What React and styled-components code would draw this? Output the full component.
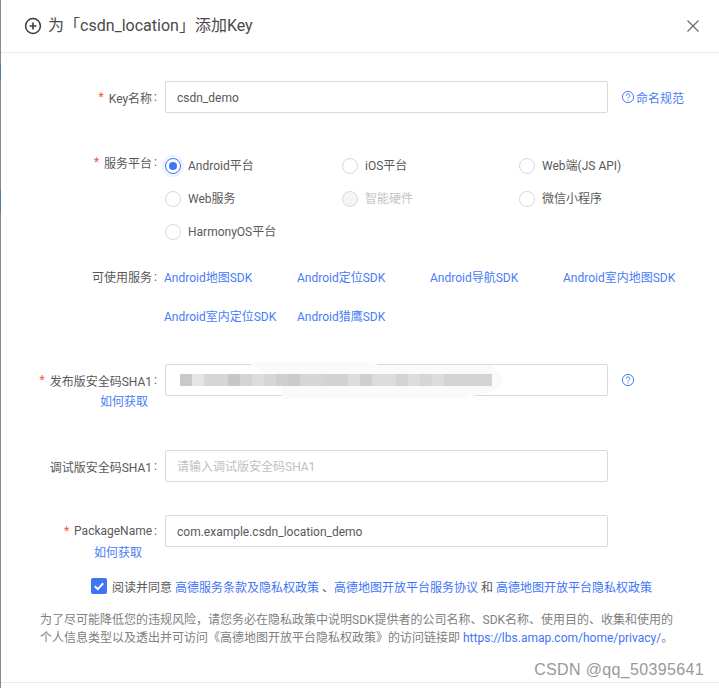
import React from "react";
import styled, { createGlobalStyle } from "styled-components";

const Global = createGlobalStyle`
  html, body { margin: 0; padding: 0; background: #fff; }
  body { font-family: Roboto, "Noto Sans CJK SC", sans-serif; font-size: 12px; color: #595959; }
  * { box-sizing: border-box; }
`;

const Page = styled.div`
  position: relative;
  display: flex;
  width: 719px;
  height: 688px;
  overflow: hidden;
  background: #fff;
`;
const EdgeStrip = styled.div`
  flex: 0 0 1px;
  background: linear-gradient(to bottom, #8a8a8a 0 64px, #5a78b0 64px 80px, #8a8a8a 80px 190px, #5a78b0 190px 212px, #8a8a8a 212px 100%);
`;
const Dialog = styled.div`
  flex: 1;
  display: flex;
  flex-direction: column;
  min-width: 0;
`;
const Header = styled.header`
  flex: 0 0 53px;
  display: flex;
  align-items: center;
  padding: 0 19px 0 23px;
  border-bottom: 1px solid #e8e8e8;
`;
const Title = styled.h1`
  flex: 1;
  margin: 0 0 0 6px;
  font-size: 16px;
  font-weight: 400;
  line-height: 24px;
  color: #4a4a4a;
`;
const Form = styled.form`
  flex: 1;
  display: flex;
  flex-direction: column;
  margin: 0;
  padding-top: 28px;
`;
const Row = styled.div`
  display: grid;
  grid-template-columns: 164px 443px auto;
  align-items: ${(p) => (p.$top ? "start" : "center")};
  margin-top: ${(p) => p.$mt || 0}px;
`;
const Label = styled.label`
  display: flex;
  justify-content: flex-end;
  align-items: center;
  height: ${(p) => p.$h || 32}px;
  color: #595959;
  white-space: nowrap;
`;
const Star = styled.span`
  color: #f5563c;
  margin-right: 5px;
`;
const Colon = styled.span`
  margin: 0 8px 0 2px;
`;
const FieldWrap = styled.div`
  position: relative;
  height: 32px;
`;
const Input = styled.input`
  display: block;
  width: 100%;
  height: 32px;
  padding: 2px 11px 0;
  border: 1px solid #d9d9d9;
  border-radius: 2px;
  outline: none;
  background: #fff;
  font: inherit;
  color: #595959;
  &::placeholder { color: #bfbfbf; opacity: 1; }
`;
const Smear = styled.div`
  position: absolute;
  left: 85px;
  top: -3px;
  width: 255px;
  height: 38px;
  background: #fafafa;
  clip-path: polygon(0 3px, 10px 0, 120px 0, 128px 4px, 240px 4px, 255px 18px, 245px 30px, 218px 36px, 218px 38px, 32px 38px, 32px 20px);
`;
const Mosaic = styled.div`
  position: absolute;
  left: 15px;
  top: 10px;
  display: flex;
`;
const MosaicCell = styled.i`
  display: block;
  width: 12px;
  height: 12px;
  background: ${(p) => p.$c};
`;
const HelpLink = styled.a`
  display: flex;
  align-items: center;
  gap: 1px;
  margin-left: 13px;
  color: #4a7cf6;
  white-space: nowrap;
`;
const SubLink = styled.a`
  display: block;
  height: 16px;
  line-height: 16px;
  margin-top: -2px;
  padding-right: ${(p) => p.$pr}px;
  text-align: right;
  color: #4a7cf6;
`;
const RadioGrid = styled.div`
  display: grid;
  grid-template-columns: repeat(3, 177px);
  grid-auto-rows: 33px;
  align-items: center;
`;
const RadioItem = styled.div`
  display: flex;
  align-items: center;
  gap: 7px;
  color: ${(p) => (p.$disabled ? "#c4c4c4" : "#595959")};
`;
const RadioText = styled.span`
  padding-bottom: 2px;
`;
const RadioDot = styled.span`
  position: relative;
  flex: 0 0 16px;
  width: 16px;
  height: 16px;
  border-radius: 50%;
  border: 1px solid ${(p) => (p.$on ? "#3f74f6" : "#d9d9d9")};
  background: ${(p) => (p.$disabled ? "#f5f5f5" : "#fff")};
  box-shadow: ${(p) => (p.$on ? "0 0 0 3px #eef3fe" : "none")};
  &::after {
    content: "";
    display: ${(p) => (p.$on ? "block" : "none")};
    position: absolute;
    left: 3px;
    top: 3px;
    width: 8px;
    height: 8px;
    border-radius: 50%;
    background: #3f74f6;
  }
`;
const ServiceRow = styled.div`
  display: grid;
  grid-template-columns: 164px 1fr;
  margin-top: 10px;
`;
const ServiceGrid = styled.div`
  display: grid;
  grid-template-columns: repeat(4, 133px);
  grid-auto-rows: 39px;
  align-items: center;
  margin-left: -1px;
`;
const ServiceLink = styled.a`
  padding-bottom: 2px;
  color: #4a7cf6;
  white-space: nowrap;
`;
const Agree = styled.div`
  display: flex;
  align-items: center;
  height: 16px;
  margin-top: 17px;
  padding-left: 90px;
  white-space: pre;
  color: #595959;
`;
const CheckBox = styled.span`
  flex: 0 0 16px;
  display: flex;
  align-items: center;
  justify-content: center;
  width: 16px;
  height: 16px;
  margin-right: 5px;
  border-radius: 2px;
  background: #3f74f6;
`;
const AgreeLink = styled.a`
  color: #3f74f6;
`;
const Note = styled.div`
  margin-top: 17px;
  padding-left: 39px;
  line-height: 18px;
  color: #808080;
`;
const NoteLine = styled.div`
  white-space: nowrap;
`;
const NoteLink = styled.a`
  color: #3f74f6;
`;
const Footer = styled.footer`
  flex: 0 0 6px;
  border-top: 1px solid #e8e8e8;
`;
const Watermark = styled.div`
  position: absolute;
  right: 15px;
  top: 660px;
  font-family: "Liberation Sans", sans-serif;
  font-size: 16px;
  line-height: 20px;
  letter-spacing: 0.35px;
  color: #999;
`;

const PlusCircle = () => (
  <svg width="18" height="18" viewBox="0 0 18 18" fill="none" stroke="#3c3c3c">
    <circle cx="9" cy="9" r="7.4" strokeWidth="1.5" />
    <path d="M9 5.6v6.8M5.6 9h6.8" strokeWidth="1.6" />
  </svg>
);
const CloseIcon = () => (
  <svg width="14" height="14" viewBox="0 0 14 14" fill="none" stroke="#666" strokeWidth="1.1">
    <path d="M1.5 1.5l11 11M12.5 1.5l-11 11" />
  </svg>
);
const HelpIcon = () => (
  <svg width="14" height="14" viewBox="0 0 14 14" fill="none" stroke="#4a7cf6" strokeWidth="1">
    <circle cx="7" cy="7" r="5.6" />
    <path d="M5.2 5.6a1.8 1.8 0 1 1 2.7 1.6c-.6.3-.9.6-.9 1.3" />
    <path d="M7 9.7v.9" />
  </svg>
);
const CheckIcon = () => (
  <svg width="12" height="12" viewBox="0 0 12 12" fill="none" stroke="#fff" strokeWidth="2">
    <path d="M1.8 6.2l3 2.9 5.4-5.9" />
  </svg>
);

const platforms = [
  { t: "Android平台", on: true },
  { t: "iOS平台" },
  { t: "Web端(JS API)" },
  { t: "Web服务" },
  { t: "智能硬件", disabled: true },
  { t: "微信小程序" },
  { t: "HarmonyOS平台" },
];
const services = [
  "Android地图SDK",
  "Android定位SDK",
  "Android导航SDK",
  "Android室内地图SDK",
  "Android室内定位SDK",
  "Android猎鹰SDK",
];
const mosaic = ["c9","e5","d6","d6","c6","d4","dc","d6","cf","cc","d6","d6","d2","d2","dc","cf","dc","dc","d4","dc","d6","dc","d4","d4","d4","d4"];

export default function App() {
  return (
    <Page>
      <Global />
      <EdgeStrip />
      <Dialog>
        <Header>
          <PlusCircle />
          <Title>为「csdn_location」添加Key</Title>
          <CloseIcon />
        </Header>
        <Form>
          <Row>
            <Label><Star>*</Star>Key名称<Colon>:</Colon></Label>
            <Input defaultValue="csdn_demo" />
            <HelpLink><HelpIcon />命名规范</HelpLink>
          </Row>
          <Row $top $mt={36}>
            <Label $h={26}><Star>*</Star>服务平台<Colon>:</Colon></Label>
            <RadioGrid>
              {platforms.map((p) => (
                <RadioItem key={p.t} $disabled={p.disabled}>
                  <RadioDot $on={p.on} $disabled={p.disabled} />
                  <RadioText>{p.t}</RadioText>
                </RadioItem>
              ))}
            </RadioGrid>
          </Row>
          <ServiceRow>
            <Label $h={37}>可使用服务<Colon>:</Colon></Label>
            <ServiceGrid>
              {services.map((s) => <ServiceLink key={s}>{s}</ServiceLink>)}
            </ServiceGrid>
          </ServiceRow>
          <Row $mt={28}>
            <Label><Star>*</Star>发布版安全码SHA1<Colon>:</Colon></Label>
            <FieldWrap>
              <Input />
              <Smear />
              <Mosaic>
                {mosaic.map((c, i) => <MosaicCell key={i} $c={"#" + c + c + c} />)}
              </Mosaic>
            </FieldWrap>
            <HelpLink><HelpIcon /></HelpLink>
            <SubLink $pr={17}>如何获取</SubLink>
          </Row>
          <Row $mt={40}>
            <Label>调试版安全码SHA1<Colon>:</Colon></Label>
            <Input placeholder="请输入调试版安全码SHA1" />
          </Row>
          <Row $mt={33}>
            <Label><Star>*</Star>PackageName<Colon>:</Colon></Label>
            <Input defaultValue="com.example.csdn_location_demo" />
            <span />
            <SubLink $pr={23}>如何获取</SubLink>
          </Row>
          <Agree>
            <CheckBox><CheckIcon /></CheckBox>
            阅读并同意 <AgreeLink>高德服务条款及隐私权政策</AgreeLink> 、<AgreeLink>高德地图开放平台服务协议</AgreeLink> 和 <AgreeLink>高德地图开放平台隐私权政策</AgreeLink>
          </Agree>
          <Note>
            <NoteLine>为了尽可能降低您的违规风险，请您务必在隐私政策中说明SDK提供者的公司名称、SDK名称、使用目的、收集和使用的</NoteLine>
            <NoteLine>个人信息类型以及透出并可访问《高德地图开放平台隐私权政策》的访问链接即 <NoteLink>https://lbs.amap.com/home/privacy/</NoteLink>。</NoteLine>
          </Note>
        </Form>
        <Footer />
      </Dialog>
      <Watermark>CSDN @qq_50395641</Watermark>
    </Page>
  );
}
